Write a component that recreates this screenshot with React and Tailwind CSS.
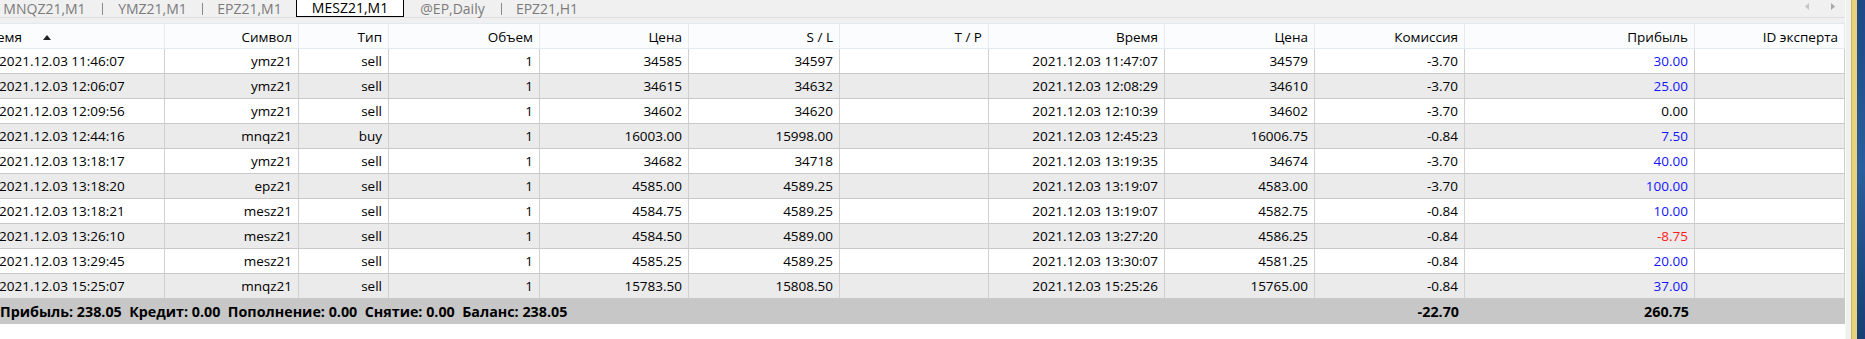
const cols =
  'grid-cols-[165px_134px_90px_151px_149px_151px_149px_176px_150px_150px_230px_150px]';

const headers = ['Символ', 'Тип', 'Объем', 'Цена', 'S / L', 'T / P', 'Время', 'Цена', 'Комиссия', 'Прибыль', 'ID эксперта'];

const rows = [
  ['2021.12.03 11:46:07', 'ymz21', 'sell', '1', '34585', '34597', '', '2021.12.03 11:47:07', '34579', '-3.70', '30.00'],
  ['2021.12.03 12:06:07', 'ymz21', 'sell', '1', '34615', '34632', '', '2021.12.03 12:08:29', '34610', '-3.70', '25.00'],
  ['2021.12.03 12:09:56', 'ymz21', 'sell', '1', '34602', '34620', '', '2021.12.03 12:10:39', '34602', '-3.70', '0.00'],
  ['2021.12.03 12:44:16', 'mnqz21', 'buy', '1', '16003.00', '15998.00', '', '2021.12.03 12:45:23', '16006.75', '-0.84', '7.50'],
  ['2021.12.03 13:18:17', 'ymz21', 'sell', '1', '34682', '34718', '', '2021.12.03 13:19:35', '34674', '-3.70', '40.00'],
  ['2021.12.03 13:18:20', 'epz21', 'sell', '1', '4585.00', '4589.25', '', '2021.12.03 13:19:07', '4583.00', '-3.70', '100.00'],
  ['2021.12.03 13:18:21', 'mesz21', 'sell', '1', '4584.75', '4589.25', '', '2021.12.03 13:19:07', '4582.75', '-0.84', '10.00'],
  ['2021.12.03 13:26:10', 'mesz21', 'sell', '1', '4584.50', '4589.00', '', '2021.12.03 13:27:20', '4586.25', '-0.84', '-8.75'],
  ['2021.12.03 13:29:45', 'mesz21', 'sell', '1', '4585.25', '4589.25', '', '2021.12.03 13:30:07', '4581.25', '-0.84', '20.00'],
  ['2021.12.03 15:25:07', 'mnqz21', 'sell', '1', '15783.50', '15808.50', '', '2021.12.03 15:25:26', '15765.00', '-0.84', '37.00'],
];

function profitColor(v) {
  const n = parseFloat(v);
  if (n > 0) return 'text-[#1414ff]';
  if (n < 0) return 'text-[#ff1a1a]';
  return 'text-black';
}

function Tabs() {
  const sep = <div className="w-px h-[12px] bg-[#8a8a8a] self-center" />;
  return (
    <div className="h-[17px] bg-[#f0f0f0] flex items-start text-[14px] leading-[17px] relative">
      <div className="flex ml-[-13px]">
        <div className="w-[115px] text-center text-[#7b7b7b]">MNQZ21,M1</div>
        {sep}
        <div className="w-[99px] text-center text-[#7b7b7b]">YMZ21,M1</div>
        {sep}
        <div className="w-[93px] text-center text-[#7b7b7b]">EPZ21,M1</div>
        <div className="w-[108px] text-center text-black bg-white border-x border-b border-black">
          <div className="h-[16px] leading-[17px] mt-[-1px]">MESZ21,M1</div>
        </div>
        <div className="w-[97px] text-center text-[#7b7b7b]">@EP,Daily</div>
        {sep}
        <div className="w-[90px] text-center text-[#7b7b7b]">EPZ21,H1</div>
      </div>
      <div className="ml-auto mr-[10px] flex gap-[22px] pt-[3px]">
        <svg width="4" height="7" viewBox="0 0 4 7"><path d="M4 0 L0 3.5 L4 7 Z" fill="#c4c4c4" /></svg>
        <svg width="4" height="7" viewBox="0 0 4 7"><path d="M0 0 L4 3.5 L0 7 Z" fill="#a8a8a8" /></svg>
      </div>
    </div>
  );
}

export default function App() {
  return (
    <div
      className="flex w-[1865px] h-[339px] overflow-hidden bg-white text-black"
      style={{ fontFamily: '"Segoe UI", "Open Sans", "Noto Sans", sans-serif' }}
    >
      <div className="w-[1845px] flex flex-col">
        <Tabs />
        <div className="h-[6px] bg-[#f0f0f0] border-t border-[#dedede]" />
        {/* header */}
        <div className={`grid ${cols} h-[26px] bg-[#fbfcfe] border-t border-[#a3a3a3] border-b border-[#e3e9f1] text-[13.5px]`}>
          <div className="flex items-center pt-[3px] overflow-hidden border-r border-[#e6ebf1]">
            <span className="ml-[-20px] whitespace-nowrap">Время</span>
            <svg className="ml-[21px]" width="8" height="5" viewBox="0 0 8 5"><path d="M4 0 L8 5 L0 5 Z" fill="#222" /></svg>
          </div>
          {headers.map((h, i) => (
            <div key={i} className="flex items-center justify-end pt-[3px] pr-[6px] whitespace-nowrap border-r border-[#e6ebf1]">
              {h}
            </div>
          ))}
        </div>
        {/* rows */}
        {rows.map((r, ri) => (
          <div
            key={ri}
            className={`grid ${cols} h-[25px] border-b border-[#c9c9c9] text-[13.5px] ${ri % 2 === 1 ? 'bg-[#ebebeb]' : 'bg-white'}`}
          >
            <div className="flex items-center pt-px overflow-hidden border-r border-[#d0d0d0]">
              <span className="ml-[-1px] whitespace-nowrap">{r[0]}</span>
            </div>
            {r.slice(1).map((c, ci) => (
              <div
                key={ci}
                className={`flex items-center justify-end pt-px pr-[6px] whitespace-nowrap border-r border-[#d0d0d0] ${ci === 9 ? profitColor(c) : ''}`}
              >
                {c}
              </div>
            ))}
            <div className="border-r border-[#d0d0d0]" />
          </div>
        ))}
        {/* footer */}
        <div className={`grid ${cols} h-[25px] bg-[#c7c7c7] text-[14.3px] font-bold`}>
          <div className="col-span-9 flex items-center pt-px whitespace-nowrap">
            <span>Прибыль: 238.05&nbsp; Кредит: 0.00&nbsp; Пополнение: 0.00&nbsp; Снятие: 0.00&nbsp; Баланс: 238.05</span>
          </div>
          <div className="flex items-center justify-end pt-px pr-[6px]">-22.70</div>
          <div className="flex items-center justify-end pt-px pr-[6px]">260.75</div>
          <div />
        </div>
      </div>
      <div className="w-[6px] bg-[#f0f0f0] border-l border-[#fafafa]" />
      <div className="w-[6px] bg-[#e8d37d] border-l border-[#c9b360]" />
      <div className="w-[8px] bg-gradient-to-b from-[#1b4a86] via-[#2a5e9c] to-[#173f73]" />
    </div>
  );
}
